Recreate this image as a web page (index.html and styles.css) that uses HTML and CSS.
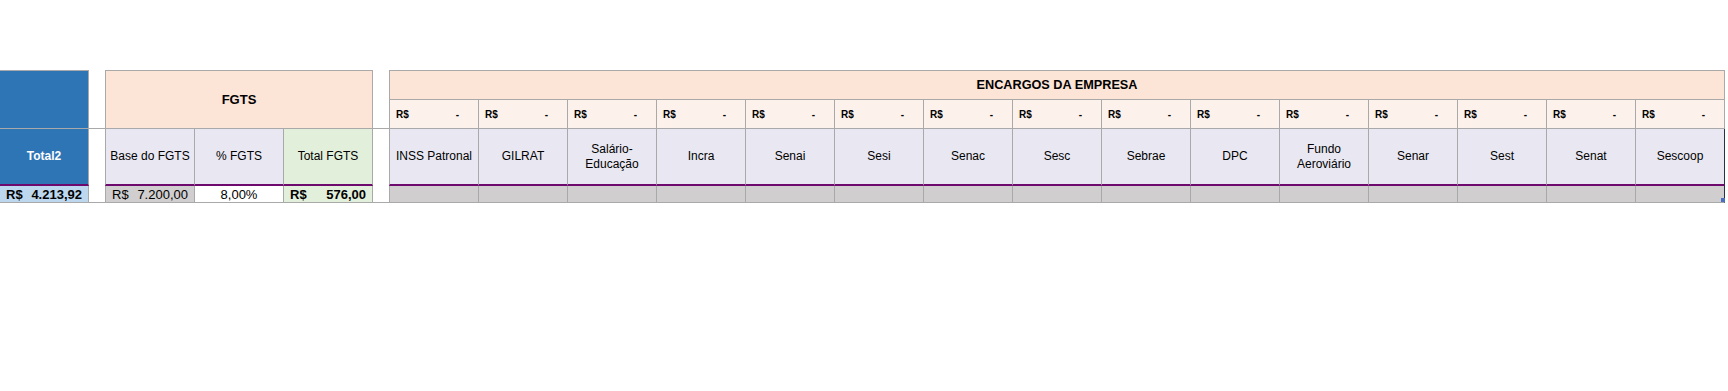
FILE: index.html
```html
<!DOCTYPE html>
<html lang="pt-BR">
<head>
<meta charset="utf-8">
<title>Encargos</title>
<link rel="stylesheet" href="styles.css">
</head>
<body>
<div class="sheet">
  <div class="c total-top"></div>
  <div class="c gap gap-top"></div>
  <div class="c fgts-title">FGTS</div>
  <div class="c gap gap-top"></div>
  <div class="c enc-title">ENCARGOS DA EMPRESA</div>

  <div class="c money first"><span>R$</span><span class="dash">-</span></div>
  <div class="c money"><span>R$</span><span class="dash">-</span></div>
  <div class="c money"><span>R$</span><span class="dash">-</span></div>
  <div class="c money"><span>R$</span><span class="dash">-</span></div>
  <div class="c money"><span>R$</span><span class="dash">-</span></div>
  <div class="c money"><span>R$</span><span class="dash">-</span></div>
  <div class="c money"><span>R$</span><span class="dash">-</span></div>
  <div class="c money"><span>R$</span><span class="dash">-</span></div>
  <div class="c money"><span>R$</span><span class="dash">-</span></div>
  <div class="c money"><span>R$</span><span class="dash">-</span></div>
  <div class="c money"><span>R$</span><span class="dash">-</span></div>
  <div class="c money"><span>R$</span><span class="dash">-</span></div>
  <div class="c money"><span>R$</span><span class="dash">-</span></div>
  <div class="c money"><span>R$</span><span class="dash">-</span></div>
  <div class="c money"><span>R$</span><span class="dash">-</span></div>

  <div class="c head total-head">Total2</div>
  <div class="c gap gap-bottom"></div>
  <div class="c head lav first">Base do FGTS</div>
  <div class="c head lav">% FGTS</div>
  <div class="c head green">Total FGTS</div>
  <div class="c gap gap-bottom"></div>
  <div class="c head lav first">INSS Patronal</div>
  <div class="c head lav">GILRAT</div>
  <div class="c head lav">Salário-<br>Educação</div>
  <div class="c head lav">Incra</div>
  <div class="c head lav">Senai</div>
  <div class="c head lav">Sesi</div>
  <div class="c head lav">Senac</div>
  <div class="c head lav">Sesc</div>
  <div class="c head lav">Sebrae</div>
  <div class="c head lav">DPC</div>
  <div class="c head lav">Fundo<br>Aeroviário</div>
  <div class="c head lav">Senar</div>
  <div class="c head lav">Sest</div>
  <div class="c head lav">Senat</div>
  <div class="c head lav last">Sescoop</div>

  <div class="c data blue-data bold"><span>R$</span><span>4.213,92</span></div>
  <div class="c data gray first"><span>R$</span><span>7.200,00</span></div>
  <div class="c data white center">8,00%</div>
  <div class="c data green bold"><span>R$</span><span>576,00</span></div>
  <div class="c data gray first"></div>
  <div class="c data gray"></div>
  <div class="c data gray"></div>
  <div class="c data gray"></div>
  <div class="c data gray"></div>
  <div class="c data gray"></div>
  <div class="c data gray"></div>
  <div class="c data gray"></div>
  <div class="c data gray"></div>
  <div class="c data gray"></div>
  <div class="c data gray"></div>
  <div class="c data gray"></div>
  <div class="c data gray"></div>
  <div class="c data gray"></div>
  <div class="c data gray last"><i class="handle"></i></div>
</div>
</body>
</html>
```

FILE: styles.css
```css
* { box-sizing: border-box; }

html, body {
  margin: 0;
  padding: 0;
  background: #ffffff;
}

body {
  font-family: "Liberation Sans", Arial, sans-serif;
  color: #000000;
}

.sheet {
  margin-top: 70px;
  display: grid;
  grid-template-columns: 89px 16px 90px 89px 89px 16px 90px repeat(14, 89px);
  grid-template-rows: 30px 29px 57px 17px;
  width: 1725px;
}

.c {
  border-right: 1px solid #a9a9a9;
  border-bottom: 1px solid #a9a9a9;
  display: flex;
  align-items: center;
  min-width: 0;
}

.first { border-left: 1px solid #a9a9a9; }

.gap { border-right: none; }
.gap-top { grid-row: span 2; }
.gap-bottom { grid-row: span 2; }

.total-top {
  grid-row: span 2;
  background: #2e75b6;
  border-top: 1px solid #a9a9a9;
}

.fgts-title {
  grid-row: span 2;
  grid-column: span 3;
  background: #fce4d6;
  border-top: 1px solid #a9a9a9;
  border-left: 1px solid #a9a9a9;
  justify-content: center;
  font-weight: bold;
  font-size: 13px;
}

.enc-title {
  grid-column: span 15;
  background: #fce4d6;
  border-top: 1px solid #a9a9a9;
  border-left: 1px solid #a9a9a9;
  justify-content: center;
  font-weight: bold;
  font-size: 12.7px;
}

.money {
  background: #fdf1eb;
  justify-content: space-between;
  padding: 0 19px 0 6px;
  font-weight: bold;
  font-size: 10px;
}

.head {
  justify-content: center;
  text-align: center;
  font-size: 12px;
  line-height: 15px;
  border-bottom: 2px solid #6e0a6e;
}

.total-head {
  background: #2e75b6;
  color: #ffffff;
  font-weight: bold;
}

.lav { background: #e9e8f2; }
.green { background: #e2efda; }
.gray { background: #d0cece; }
.white { background: #ffffff; }
.blue-data { background: #bdd7ee; }

.data {
  font-size: 13px;
  justify-content: space-between;
  padding: 0 6px 0 6px;
}

.data.center { justify-content: center; }
.bold { font-weight: bold; }

.last {
  border-right-color: #243447;
  position: relative;
}

.handle {
  position: absolute;
  right: -1px;
  bottom: 0;
  width: 4px;
  height: 4px;
  background: #4a6fbf;
}
```
